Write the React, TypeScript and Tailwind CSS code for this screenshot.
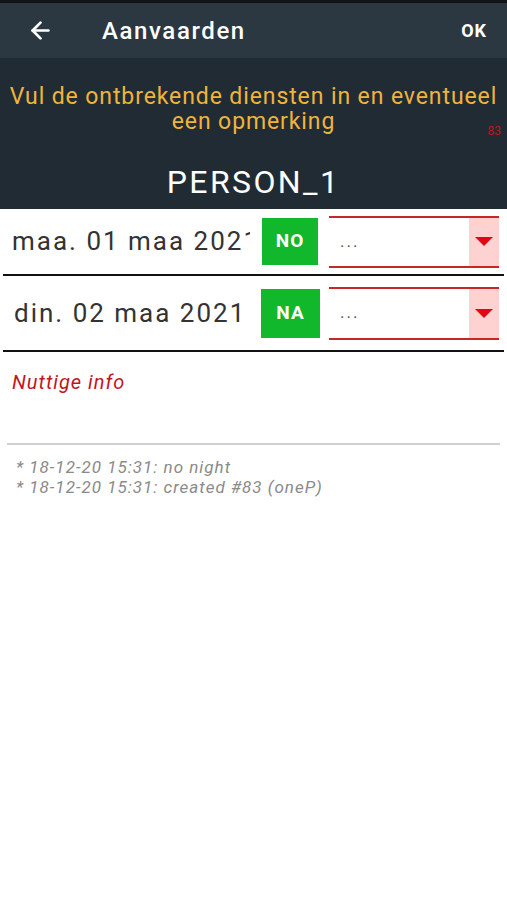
import { ArrowLeft } from "lucide-react";

interface DayRowProps {
  label: string;
  code: string;
  height: string;
  labelPad: string;
  boxClass: string;
  dropClass: string;
}

function DayRow({ label, code, height, labelPad, boxClass, dropClass }: DayRowProps) {
  return (
    <div className={`flex items-center ${height}`}>
      <div className={`w-[247px] shrink-0 overflow-hidden whitespace-nowrap text-[26px] tracking-[2px] text-[#333] ${labelPad}`}>
        {label}
      </div>
      <div className={`flex items-center justify-center bg-[#12b82b] text-[19px] font-bold tracking-[1px] text-white ${boxClass}`}>
        {code}
      </div>
      <div className={`flex w-[170px] border-y-2 border-[#c62828] ${dropClass}`}>
        <div className="flex flex-1 items-center pl-[11px] text-[17px] tracking-[2px] text-[#555]">...</div>
        <div className="flex w-[30px] items-center justify-center bg-[#ffd2d2]">
          <svg width="18" height="9" viewBox="0 0 18 9">
            <path d="M0 0 L18 0 L9 9 Z" fill="#e30613" />
          </svg>
        </div>
      </div>
    </div>
  );
}

export default function App() {
  return (
    <div className="min-h-[900px] w-[507px] bg-white font-['Roboto',sans-serif]">
      <div className="h-[3px] bg-[#111417]" />
      <div className="flex h-[55px] items-center bg-[#2c3841] text-white">
        <ArrowLeft className="ml-[27px]" size={27} strokeWidth={2.4} />
        <div className="ml-[48px] text-[24px] font-medium tracking-[1.6px]">Aanvaarden</div>
        <div className="ml-auto mr-[20px] text-[18px] font-bold tracking-[1px]">OK</div>
      </div>
      <div className="relative flex h-[151px] flex-col items-center bg-[#212b33] pt-[26px]">
        <div className="text-center text-[23px] leading-[25px] tracking-[0.9px] text-[#f0b43c]">
          Vul de ontbrekende diensten in en eventueel
          <br />
          een opmerking
        </div>
        <div className="absolute right-[6px] top-[64px] text-[12px] text-[#c0141c]">83</div>
        <div className="mt-[30px] text-[32px] leading-[36px] tracking-[2.4px] text-white">PERSON_1</div>
      </div>
      <div className="bg-white px-[3px]">
        <DayRow
          label="maa. 01 maa 2021"
          code="NO"
          height="h-[65px]"
          labelPad="pl-[9px]"
          boxClass="ml-[12px] h-[47px] w-[56px]"
          dropClass="ml-[11px] h-[52px]"
        />
        <div className="h-[2px] bg-[#111]" />
        <DayRow
          label="din. 02 maa 2021"
          code="NA"
          height="h-[74px]"
          labelPad="pl-[11px]"
          boxClass="ml-[11px] h-[49px] w-[59px]"
          dropClass="ml-[9px] h-[53px]"
        />
        <div className="h-[2px] bg-[#111]" />
      </div>
      <div className="px-[12px] pt-[15px] text-[20px] italic tracking-[1px] text-[#c1161d]">Nuttige info</div>
      <div className="mx-[7px] mt-[46px] h-[2px] bg-[#d0d0d0]" />
      <div className="px-[16px] pt-[12px] text-[17px] italic leading-[20px] tracking-[1px] text-[#8a8a8a]">
        <div>* 18-12-20 15:31: no night</div>
        <div>* 18-12-20 15:31: created #83 (oneP)</div>
      </div>
    </div>
  );
}
